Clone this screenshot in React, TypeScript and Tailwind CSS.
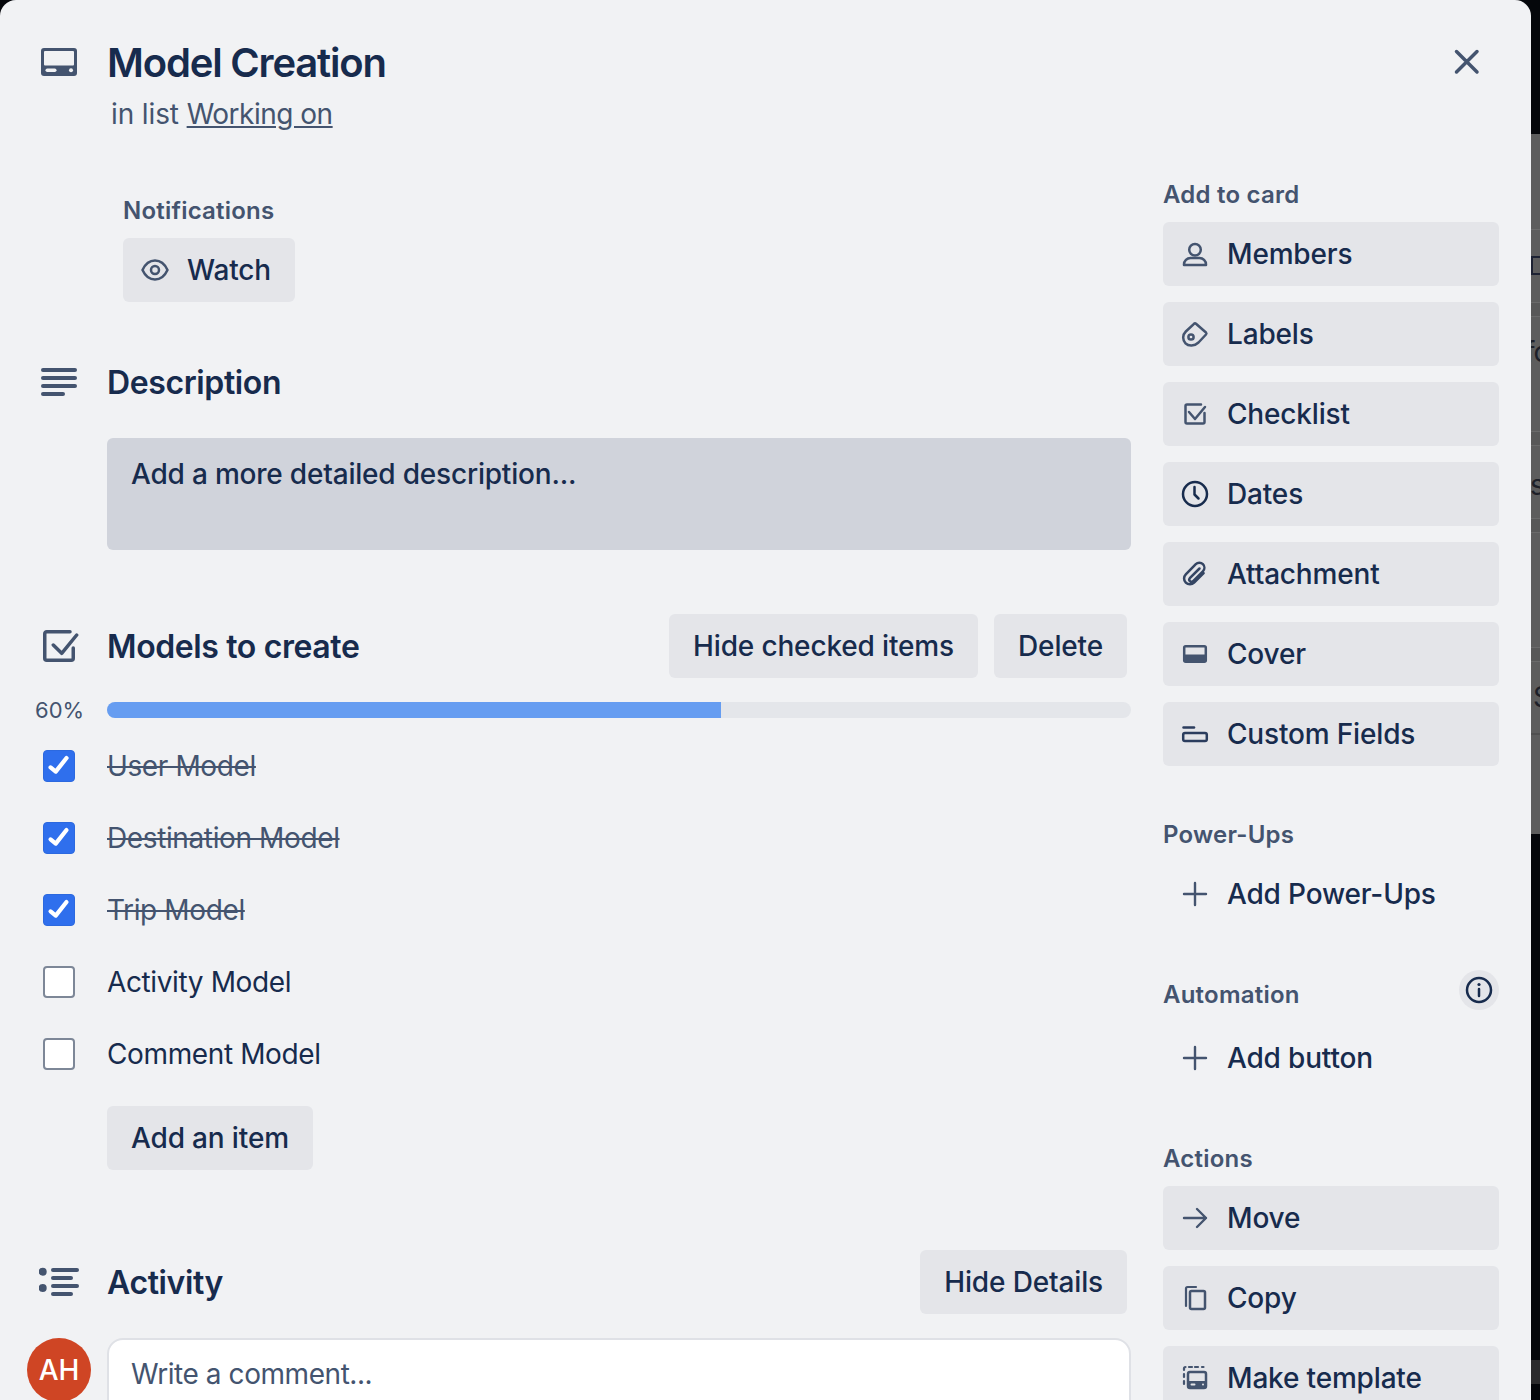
import React from "react";

const SUB = "#44546f";
const DARK = "#172b4d";

function Svg({ children, className = "w-8 h-8" }: { children: React.ReactNode; className?: string }) {
  return (
    <svg viewBox="0 0 32 32" className={`${className} shrink-0`} fill="none" stroke={SUB} strokeWidth="2.5" strokeLinecap="round" strokeLinejoin="round">
      {children}
    </svg>
  );
}

const Member = () => (
  <Svg>
    <circle cx="16" cy="11.800" r="5.800" />
    <path d="M5 27v-.5a6.500 6.500 0 0 1 6.500-6.500h9a6.500 6.500 0 0 1 6.500 6.500v.5z" />
  </Svg>
);
const Tag = () => (
  <Svg>
    <path d="M15 5.800a1.500 1.500 0 0 1 2 0L27 14.500a1.500 1.500 0 0 1 0 2L19.500 24.500c-4 3.800-10 3.800-13 .8S3.200 17 6.800 13.500z" />
    <circle cx="12" cy="19" r="2.600" />
  </Svg>
);
const Check = () => (
  <Svg>
    <path d="M22 6.500H8A1.500 1.500 0 0 0 6.500 8v16A1.500 1.500 0 0 0 8 25.500h16a1.500 1.500 0 0 0 1.500-1.500V15" />
    <path d="M10 14l6 7 10-12" />
  </Svg>
);
const Clock = () => (
  <Svg>
    <g stroke={DARK}>
      <circle cx="16" cy="16" r="12" />
      <path d="M15.500 9v7.500l4 4" />
    </g>
  </Svg>
);
const Clip = () => (
  <Svg>
    <path d="M20.500 10.500 10.800 20.200a2.200 2.200 0 0 0 3.100 3.100l10-10a5 5 0 0 0-7.100-7.100L6.800 16.300a5.800 5.800 0 0 0 8.300 8.300l9.500-9.500" stroke="#344563" strokeWidth="2.500" />
  </Svg>
);
const Cover = () => (
  <Svg>
    <rect x="5.200" y="8.200" width="21.600" height="15.600" rx="1.500" />
    <rect x="5" y="16.500" width="22" height="7.500" fill={SUB} stroke="none" />
  </Svg>
);
const Fields = () => (
  <Svg>
    <g stroke="#2b3d5e">
      <path d="M4.500 9.500H15" />
      <rect x="4.200" y="15" width="23.600" height="8" rx="1.800" />
    </g>
  </Svg>
);
const Plus = () => (
  <Svg>
    <path d="M16 5v22M5 16h22" strokeWidth="2.400" />
  </Svg>
);
const Arrow = () => (
  <Svg>
    <path d="M5 16h22M18 7l9 9-9 9" strokeWidth="2.400" />
  </Svg>
);
const Copy = () => (
  <Svg>
    <path d="M7 24V6.500A1.500 1.500 0 0 1 8.500 5H17" strokeWidth="2.200" />
    <rect x="11" y="9" width="15" height="18" rx="1.500" />
  </Svg>
);
const Template = () => (
  <Svg>
    <path d="M5 8V6.500A1.500 1.500 0 0 1 6.500 5M10 5h3M16 5h3M23 5h1.500M5 12v3M5 19v3" strokeWidth="2.200" />
    <rect x="9" y="10" width="18" height="16" rx="2" />
    <path d="M9 19h18v5a2 2 0 0 1-2 2H11a2 2 0 0 1-2-2z" fill={SUB} stroke="none" />
    <rect x="11.500" y="21.500" width="5" height="2" rx="1" fill="#e4e5e9" stroke="none" />
    <circle cx="24" cy="22.500" r="1" fill="#e4e5e9" stroke="none" />
  </Svg>
);

function ActionButton({ icon, label, plain }: { icon: React.ReactNode; label: string; plain?: boolean }) {
  return (
    <div className={`h-16 rounded-md flex items-center pl-4 gap-4 text-[28px] leading-10 font-medium tracking-[-0.17px] text-[#172b4d] ${plain ? "" : "bg-[#e4e5e9]"}`}>
      {icon}
      <span>{label}</span>
    </div>
  );
}

function Btn({ label }: { label: string }) {
  return <div className="h-16 px-6 rounded-md bg-[#e4e5e9] flex items-center whitespace-nowrap text-[28px] font-medium tracking-[-0.15px] text-[#172b4d]">{label}</div>;
}

function SideLabel({ children }: { children: React.ReactNode }) {
  return <div className="text-[24px] leading-8 pt-px -mb-px font-semibold tracking-[0.22px] text-[#44546f]">{children}</div>;
}

function Heading({ children }: { children: React.ReactNode }) {
  return <h2 className="flex-1 text-[32px] leading-10 pt-px -mb-px font-semibold tracking-[-0.38px]">{children}</h2>;
}

function Item({ label, done }: { label: string; done: boolean }) {
  return (
    <div className="h-[72px] flex items-center">
      <div className="w-[107px] pl-[43px] shrink-0">
        {done ? (
          <div className="w-8 h-8 rounded bg-[#2f6fed] border border-[#2c69df]">
            <svg viewBox="0 0 32 32" className="w-[30px] h-[30px]" fill="none" stroke="#fff" strokeWidth="4.500" strokeLinecap="round" strokeLinejoin="round">
              <path d="M7 17.500l5.500 4.500L24 7.500" />
            </svg>
          </div>
        ) : (
          <div className="w-8 h-8 rounded bg-white border-2 border-[#7d8797]" />
        )}
      </div>
      <span className={`text-[28px] tracking-[-0.38px] ${done ? "line-through text-[#44546f]" : "text-[#172b4d]"}`}>{label}</span>
    </div>
  );
}

function Band() {
  return <div className="h-[15px] bg-[#585858] border-y border-[#6a6a6a]" />;
}
function Gap({ h }: { h: string }) {
  return <div className={`${h} bg-[#5d5d5d]`} />;
}

function Strip() {
  return (
    <div className="w-[9px] h-[1400px] shrink-0 overflow-hidden flex flex-col bg-[#05070b]">
      <div className="h-[134px]" />
      <Gap h="h-[95px]" />
      <div className="h-px bg-[#6c6c6c]" />
      <Gap h="h-[26px]" />
      <div className="h-[19px] bg-[#5d5d5d] border-y-2 border-l-2 border-[#1d2233]" />
      <Gap h="h-[27px]" />
      <Band />
      <div className="h-[114px] bg-[#5d5d5d] text-[28px] leading-[70px] -tracking-[1px] text-[#1d2028] whitespace-nowrap">
        <span className="block -ml-[6px]">fo</span>
      </div>
      <Band />
      <div className="h-[72px] bg-[#5d5d5d] text-[28px] leading-[78px] text-[#1d2028]">
        <span className="block -ml-[1px]">s</span>
      </div>
      <Band />
      <Gap h="h-[114px]" />
      <Band />
      <div className="h-[71px] bg-[#5d5d5d] text-[28px] leading-[70px] text-[#1d2028]">
        <span className="block ml-[2px]">S</span>
      </div>
      <div className="h-[2px] bg-[#505050]" />
      <Gap h="h-[99px]" />
      <div className="h-[526px]" />
      <div className="h-6 bg-[#2b2b2d]" />
    </div>
  );
}

export default function App() {
  return (
    <div className="w-[1540px] h-[1400px] flex overflow-hidden bg-[#05070b]" style={{ fontFamily: "Inter, 'Noto Sans', sans-serif" }}>
      <div className="w-[1531px] h-[1400px] shrink-0 overflow-hidden bg-[#f1f2f4] rounded-t-2xl text-[#172b4d]">
        {/* Header */}
        <div className="flex pt-[39px] pr-[44px]">
          <div className="w-[107px] shrink-0 pl-[41px] pt-[9px]">
            <svg viewBox="0 0 36 28" className="w-9 h-7" fill={SUB}>
              <rect width="36" height="28" rx="3" />
              <rect x="3" y="3" width="30" height="14.500" rx="1" fill="#f1f2f4" />
              <rect x="4.500" y="20.500" width="11" height="3.500" rx="1.750" fill="#f1f2f4" />
              <circle cx="30" cy="22.300" r="2" fill="#f1f2f4" />
            </svg>
          </div>
          <div className="flex-1">
            <h1 className="text-[40px] leading-[48px] font-semibold tracking-[-1.18px]">Model Creation</h1>
            <div className="mt-[7px] ml-1 text-[28px] leading-10 tracking-[-0.12px] text-[#44546f]">
              in list <span className="underline tracking-[-0.5px]">Working on</span>
            </div>
          </div>
          <svg viewBox="0 0 40 40" className="w-10 h-10 shrink-0 mt-[2px]" fill="none" stroke={SUB} strokeWidth="3.500" strokeLinecap="round">
            <path d="M9.500 10.500 30 31M30 10.500 9.500 31" />
          </svg>
        </div>

        {/* Body */}
        <div className="flex mt-[44px]">
          {/* Main column */}
          <div className="w-[1131px] shrink-0 pt-4">
            <div className="ml-[123px]">
              <SideLabel>Notifications</SideLabel>
              <div className="mt-3 w-[172px] h-16 rounded-md bg-[#e4e5e9] flex items-center pl-4 gap-4 text-[28px] font-medium tracking-[-0.17px]">
                <Svg>
                  <path d="M3.500 16C6 10.500 10.500 6.500 16 6.500S26 10.500 28.500 16C26 21.500 21.500 25.500 16 25.500S6 21.500 3.500 16Z" />
                  <circle cx="16" cy="16" r="4" />
                </Svg>
                <span>Watch</span>
              </div>
            </div>

            <div className="mt-[60px] flex items-center h-10">
              <div className="w-[107px] pl-[41px] shrink-0">
                <svg viewBox="0 0 36 30" className="w-9 h-[30px]" fill={SUB}>
                  <rect y="1" width="36" height="4" rx="2" />
                  <rect y="9" width="36" height="4" rx="2" />
                  <rect y="17" width="36" height="4" rx="2" />
                  <rect y="25" width="24" height="4" rx="2" />
                </svg>
              </div>
              <Heading>Description</Heading>
            </div>
            <div className="mt-9 ml-[107px] h-28 rounded-md bg-[#d0d3db] px-6 py-4 text-[28px] leading-10 font-medium tracking-[-0.2px]">
              Add a more detailed description...
            </div>

            <div className="mt-16 flex items-center pr-1">
              <div className="w-[107px] pl-[43px] shrink-0">
                <svg viewBox="0 0 36 36" className="w-9 h-9" fill="none" stroke={SUB} strokeWidth="3.500" strokeLinecap="round" strokeLinejoin="round">
                  <path d="M27 3.750H3.750a2 2 0 0 0-2 2v24.500a2 2 0 0 0 2 2h24.500a2 2 0 0 0 2-2V20" />
                  <path d="M10.300 17l8.400 8.300L33.700 7" />
                </svg>
              </div>
              <Heading>Models to create</Heading>
              <div className="flex gap-4">
                <Btn label="Hide checked items" />
                <Btn label="Delete" />
              </div>
            </div>

            <div className="mt-6 h-4 flex items-center">
              <div className="w-[107px] pl-[35px] shrink-0 text-[22px] text-[#44546f]">60%</div>
              <div className="flex-1 h-4 rounded-full bg-[#e4e6ea] overflow-hidden">
                <div className="h-4 w-[60%] bg-[#669df1]" />
              </div>
            </div>

            <div className="mt-3">
              <Item label="User Model" done />
              <Item label="Destination Model" done />
              <Item label="Trip Model" done />
              <Item label="Activity Model" done={false} />
              <Item label="Comment Model" done={false} />
            </div>

            <div className="mt-4 ml-[107px] w-[206px]">
              <Btn label="Add an item" />
            </div>

            <div className="mt-20 flex items-center pr-1">
              <div className="w-[107px] pl-[39px] shrink-0">
                <svg viewBox="0 0 40 32" className="w-10 h-8" fill={SUB}>
                  <circle cx="3.700" cy="5.700" r="4" />
                  <circle cx="3.700" cy="22" r="4" />
                  <rect x="12" y="2" width="28" height="4" rx="2" />
                  <rect x="12" y="10" width="22" height="4" rx="2" />
                  <rect x="12" y="18" width="28" height="4" rx="2" />
                  <rect x="12" y="26" width="22" height="4" rx="2" />
                </svg>
              </div>
              <Heading>Activity</Heading>
              <Btn label="Hide Details" />
            </div>

            <div className="mt-6 flex">
              <div className="w-[107px] pl-[27px] shrink-0">
                <div className="w-16 h-16 rounded-full bg-[#cf4524] text-white text-[28px] font-medium flex items-center justify-center">AH</div>
              </div>
              <div className="flex-1 h-28 rounded-2xl bg-white border-2 border-[#dfe1e6] px-[22px] py-[14px] text-[28px] leading-10 tracking-[-0.44px] text-[#44546f]">
                Write a comment...
              </div>
            </div>
          </div>

          {/* Sidebar */}
          <div className="w-[336px] ml-8 shrink-0">
            <SideLabel>Add to card</SideLabel>
            <div className="mt-3 flex flex-col gap-4">
              <ActionButton icon={<Member />} label="Members" />
              <ActionButton icon={<Tag />} label="Labels" />
              <ActionButton icon={<Check />} label="Checklist" />
              <ActionButton icon={<Clock />} label="Dates" />
              <ActionButton icon={<Clip />} label="Attachment" />
              <ActionButton icon={<Cover />} label="Cover" />
              <ActionButton icon={<Fields />} label="Custom Fields" />
            </div>

            <div className="mt-[52px]">
              <SideLabel>Power-Ups</SideLabel>
            </div>
            <div className="mt-3">
              <ActionButton icon={<Plus />} label="Add Power-Ups" plain />
            </div>

            <div className="mt-11 flex items-end justify-between">
              <SideLabel>Automation</SideLabel>
              <div className="w-10 h-10 rounded-full bg-[#e4e5e9] flex items-center justify-center">
                <svg viewBox="0 0 32 32" className="w-8 h-8" fill="none" stroke={DARK} strokeWidth="2.500" strokeLinecap="round">
                  <circle cx="16" cy="16" r="12" />
                  <path d="M16 15v7" />
                  <circle cx="16" cy="10.500" r="1.600" fill={DARK} stroke="none" />
                </svg>
              </div>
            </div>
            <div className="mt-4">
              <ActionButton icon={<Plus />} label="Add button" plain />
            </div>

            <div className="mt-[52px]">
              <SideLabel>Actions</SideLabel>
            </div>
            <div className="mt-3 flex flex-col gap-4">
              <ActionButton icon={<Arrow />} label="Move" />
              <ActionButton icon={<Copy />} label="Copy" />
              <ActionButton icon={<Template />} label="Make template" />
            </div>
          </div>
        </div>
      </div>
      <Strip />
    </div>
  );
}
